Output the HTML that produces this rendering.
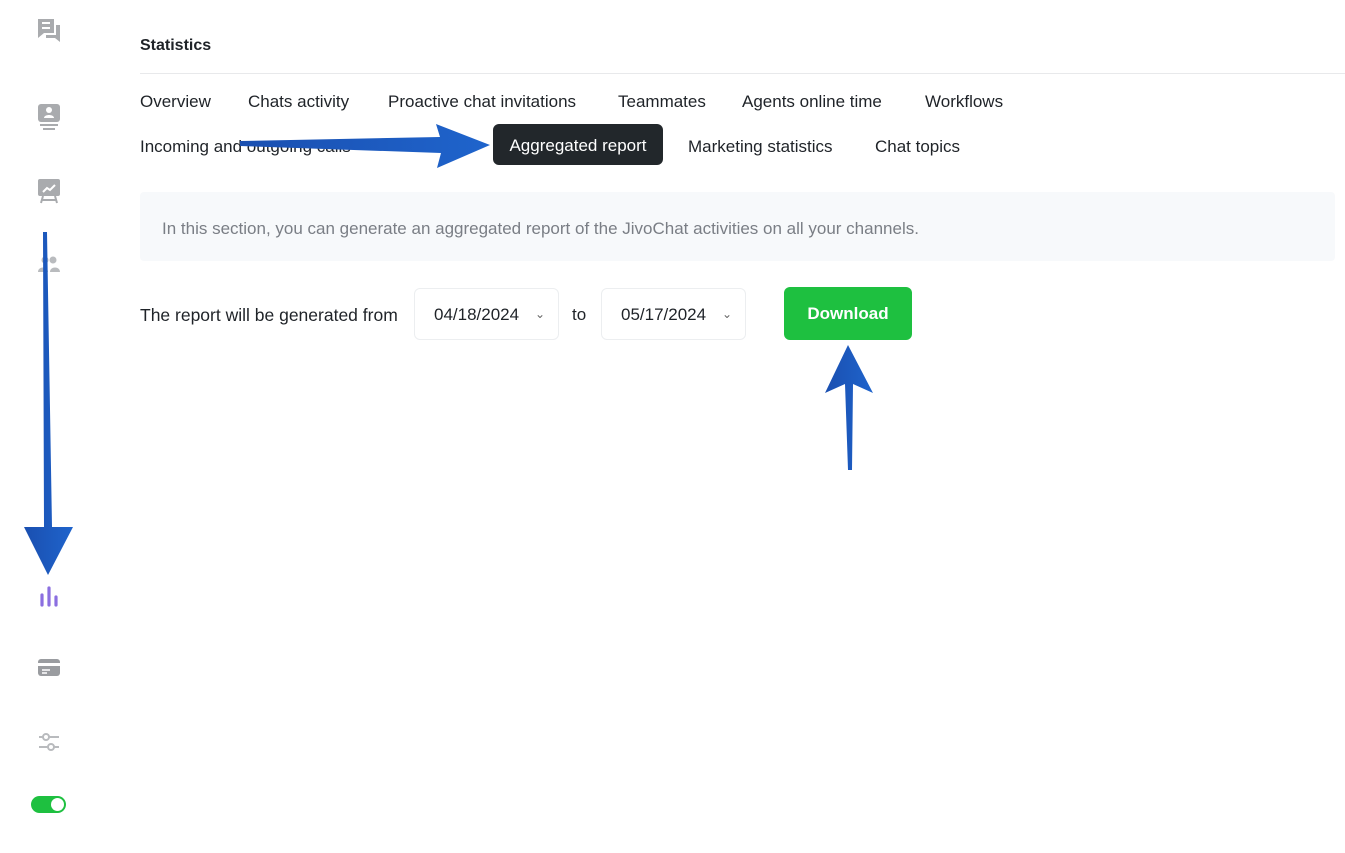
<!DOCTYPE html>
<html><head><meta charset="utf-8"><style>
body{margin:0;width:1345px;height:853px;background:#fff;font-family:"Liberation Sans",sans-serif;color:#1f2328;position:relative;overflow:hidden}
.a{position:absolute;white-space:nowrap}
.tab{font-size:17px;position:absolute;top:92px}
.tab2{font-size:17px;position:absolute;top:137px}
.ic{position:absolute;left:37px}
</style></head><body>
<svg class="ic" style="top:17px" width="26" height="28" viewBox="0 0 26 28"><path d="M1 2h16v14H7l-6 5z" fill="#a9abae"/><path d="M5 6h8M5 11h8" stroke="#fff" stroke-width="2"/><path d="M19 8h4v17l-5-4H9v-3h10z" fill="#a9abae"/></svg>
<svg class="ic" style="top:104px" width="24" height="26" viewBox="0 0 24 26"><rect x="1" y="0" width="22" height="18" rx="3" fill="#a9abae"/><circle cx="12" cy="6" r="3" fill="#fff"/><path d="M7 14c0-4 10-4 10 0z" fill="#fff"/><path d="M3 21h18M6 25h12" stroke="#a9abae" stroke-width="2"/></svg>
<svg class="ic" style="top:178px" width="24" height="26" viewBox="0 0 24 26"><rect x="1" y="1" width="22" height="17" rx="2" fill="#a9abae"/><path d="M6 14l4-4 3 2 5-5" stroke="#fff" stroke-width="2" fill="none"/><path d="M6 18l-2 7M18 18l2 7M4 22h16" stroke="#a9abae" stroke-width="2"/></svg>
<svg class="ic" style="top:255px" width="24" height="20" viewBox="0 0 24 20"><circle cx="8" cy="5" r="3.5" fill="#b9bbbe"/><circle cx="16" cy="5" r="3.5" fill="#b9bbbe"/><path d="M1 17c0-6 10-6 10 0zM13 17c0-6 10-6 10 0z" fill="#b9bbbe"/></svg>
<svg class="ic" style="top:585px" width="24" height="22" viewBox="0 0 24 22"><path d="M5 10v10M12 3v17M19 12v8" stroke="#8b6fe0" stroke-width="3.2" stroke-linecap="round"/></svg>
<svg class="ic" style="top:658px" width="24" height="20" viewBox="0 0 24 20"><rect x="1" y="1" width="22" height="17" rx="3" fill="#9a9ca0"/><rect x="1" y="5" width="22" height="3" fill="#fff"/><path d="M5 12h8M5 15h5" stroke="#fff" stroke-width="1.5"/></svg>
<svg class="ic" style="top:732px" width="24" height="22" viewBox="0 0 24 22"><path d="M2 5h20M2 15h20" stroke="#b9bbbe" stroke-width="2"/><circle cx="9" cy="5" r="3" fill="#fff" stroke="#b9bbbe" stroke-width="2"/><circle cx="14" cy="15" r="3" fill="#fff" stroke="#b9bbbe" stroke-width="2"/></svg>
<div class="a" style="left:31px;top:796px;width:35px;height:17px;border-radius:9px;background:#1ec040"><div style="position:absolute;right:2px;top:2px;width:13px;height:13px;border-radius:50%;background:#fff"></div></div>

<div class="a" style="left:140px;top:37px;font-size:16px;font-weight:bold">Statistics</div>
<div class="a" style="left:140px;top:73px;width:1205px;height:1px;background:#e8e9eb"></div>
<div class="tab" style="left:140px">Overview</div>
<div class="tab" style="left:248px">Chats activity</div>
<div class="tab" style="left:388px">Proactive chat invitations</div>
<div class="tab" style="left:618px">Teammates</div>
<div class="tab" style="left:742px">Agents online time</div>
<div class="tab" style="left:925px">Workflows</div>
<div class="tab2" style="left:140px">Incoming and outgoing calls</div>
<div class="a" style="left:493px;top:124px;width:170px;height:41px;background:#22272b;border-radius:6px;color:#fff;font-size:17px;line-height:43px;text-align:center">Aggregated report</div>
<div class="tab2" style="left:688px">Marketing statistics</div>
<div class="tab2" style="left:875px">Chat topics</div>

<div class="a" style="left:140px;top:192px;width:1195px;height:69px;background:#f7f9fb;border-radius:4px"></div>
<div class="a" style="left:162px;top:219px;font-size:17px;color:#7a7e85">In this section, you can generate an aggregated report of the JivoChat activities on all your channels.</div>

<div class="a" style="left:140px;top:305px;font-size:17.5px">The report will be generated from</div>
<div class="a" style="left:414px;top:288px;width:145px;height:52px;border:1px solid #eceef0;border-radius:6px;box-sizing:border-box;font-size:17px;line-height:52px;padding-left:19px">04/18/2024<span style="position:absolute;right:13px;top:-1px;font-size:12px;color:#666">&#8964;</span></div>
<div class="a" style="left:572px;top:305px;font-size:17px">to</div>
<div class="a" style="left:601px;top:288px;width:145px;height:52px;border:1px solid #eceef0;border-radius:6px;box-sizing:border-box;font-size:17px;line-height:52px;padding-left:19px">05/17/2024<span style="position:absolute;right:13px;top:-1px;font-size:12px;color:#666">&#8964;</span></div>
<div class="a" style="left:784px;top:287px;width:128px;height:53px;background:#1ec040;border-radius:6px;color:#fff;font-weight:bold;font-size:17px;line-height:53px;text-align:center">Download</div>

<svg class="a" style="left:0;top:0" width="1345" height="853">
<defs><linearGradient id="g" x1="0" x2="1"><stop offset="0" stop-color="#1a4fb0"/><stop offset="1" stop-color="#1f64cc"/></linearGradient></defs>
<polygon points="240,141 440,137 436,124 490,145 437,168 441,153 240,146" fill="url(#g)"/>
<polygon points="43,232 47,232 52,527 73,527 48,575 24,527 44,527" fill="url(#g)"/>
<polygon points="848,345 873,393 853,384 852,470 848,470 845,384 825,393" fill="url(#g)"/>
</svg>
</body></html>
